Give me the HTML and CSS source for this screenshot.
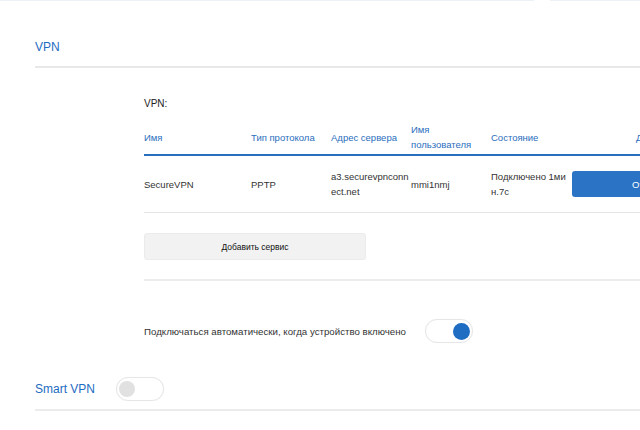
FILE: index.html
```html
<!DOCTYPE html>
<html lang="ru">
<head>
<meta charset="utf-8">
<title>VPN</title>
<link rel="stylesheet" href="styles.css">
</head>
<body>
<div class="page">
  <div class="topline"></div>
  <div class="section-head">
    <h2 class="section-title">VPN</h2>
  </div>
  <div class="vpn-body">
    <div class="list-label">VPN:</div>
    <table class="vpn-table">
      <colgroup>
        <col class="c-name"><col class="c-proto"><col class="c-addr"><col class="c-user"><col class="c-state"><col class="c-act">
      </colgroup>
      <thead>
        <tr>
          <th>Имя</th>
          <th>Тип протокола</th>
          <th>Адрес сервера</th>
          <th>Имя пользователя</th>
          <th>Состояние</th>
          <th class="th-act">Действие</th>
        </tr>
      </thead>
      <tbody>
        <tr>
          <td>SecureVPN</td>
          <td>PPTP</td>
          <td class="td-wrap">a3.securevpnconnect.net</td>
          <td>mmi1nmj</td>
          <td class="td-wrap">Подключено 1мин.7с</td>
          <td><button class="btn-primary">Отключить</button></td>
        </tr>
      </tbody>
    </table>
    <div class="add-row">
      <button class="btn-add">Добавить сервис</button>
    </div>
    <div class="auto-row">
      <span class="auto-text">Подключаться автоматически, когда устройство включено</span>
      <span class="toggle on"><span class="knob"></span></span>
    </div>
  </div>
  <div class="smart-head">
    <h2 class="section-title">Smart VPN</h2>
    <span class="toggle off"><span class="knob"></span></span>
  </div>
</div>
</body>
</html>
```
FILE: styles.css
```css
html, body {
  margin: 0;
  padding: 0;
  overflow: hidden;
  background: #fff;
}
body {
  width: 640px;
  height: 430px;
  font-family: "Liberation Sans", Arial, sans-serif;
  color: #333;
}
.page {
  width: 640px;
}
.topline {
  height: 1px;
  background: linear-gradient(to right, #edf2f8 0, #edf2f8 534px, #fff 534px, #fff 550px, #edf2f8 550px);
}
.section-head {
  margin-left: 35px;
  padding: 38px 0 11px;
  border-bottom: 2px solid #e8e8e8;
}
.section-title {
  margin: 0;
  font-size: 12px;
  font-weight: normal;
  line-height: 16px;
  color: #1d6cc2;
}
.vpn-body {
  margin-left: 144px;
}
.list-label {
  margin-top: 28px;
  font-size: 10px;
  line-height: 15px;
  color: #222;
}
.vpn-table {
  margin-top: 9px;
  border-collapse: collapse;
  table-layout: fixed;
  width: 628px;
  font-size: 9.5px;
}
.c-name { width: 107px; }
.c-proto { width: 80px; }
.c-addr { width: 80px; }
.c-user { width: 80px; }
.c-state { width: 81px; }
.c-act { width: 200px; }
.vpn-table th {
  height: 34px;
  padding: 0;
  text-align: left;
  vertical-align: middle;
  font-weight: normal;
  color: #2a6ebd;
  line-height: 15px;
  border-bottom: 2px solid #2a6ebd;
}
.vpn-table th.th-act {
  padding-left: 64px;
}
.vpn-table td {
  height: 56px;
  padding: 0;
  vertical-align: middle;
  line-height: 15px;
  color: #333;
  border-bottom: 1px solid #e4e4e4;
}
.vpn-table td.td-wrap {
  word-break: break-all;
  padding-right: 2px;
}
.btn-primary {
  display: block;
  width: 168px;
  height: 26px;
  border: none;
  border-radius: 3px;
  background: #2a73c5;
  color: #fff;
  font-family: inherit;
  font-size: 9.5px;
  text-align: center;
  padding: 0;
}
.add-row {
  padding: 20px 0 19px;
  border-bottom: 2px solid #ececec;
}
.btn-add {
  display: block;
  width: 222px;
  height: 27px;
  border: 1px solid #ebebeb;
  border-radius: 3px;
  background: #f2f2f2;
  font-family: inherit;
  font-size: 8.5px;
  color: #111;
  padding: 0;
}
.auto-row {
  display: flex;
  align-items: center;
  gap: 19px;
  padding: 38px 0 0;
  height: 24px;
}
.auto-text {
  font-size: 9.7px;
  color: #333;
}
.toggle {
  position: relative;
  display: inline-block;
  box-sizing: border-box;
  width: 48px;
  height: 24px;
  border: 1px solid #e6e6e6;
  border-radius: 12px;
  background: #fff;
  box-shadow: 0 0 1px rgba(0,0,0,0.05);
}
.toggle .knob {
  position: absolute;
  top: 2.5px;
  width: 17px;
  height: 17px;
  border-radius: 50%;
}
.toggle.on .knob {
  right: 2px;
  background: #1f6dc3;
}
.toggle.off .knob {
  left: 2px;
  width: 16px;
  height: 16px;
  top: 3px;
  background: #e1e1e1;
}
.smart-head {
  margin-left: 35px;
  margin-top: 34px;
  display: flex;
  align-items: center;
  gap: 21px;
  padding-bottom: 8px;
  border-bottom: 2px solid #ececec;
}
```
